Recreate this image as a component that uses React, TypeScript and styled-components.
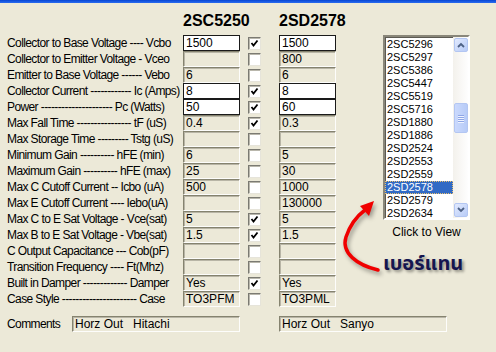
import { Fragment } from 'react'
import styled, { createGlobalStyle } from 'styled-components'

const GlobalStyle = createGlobalStyle`
  html, body {
    margin: 0;
    padding: 0;
    background: #ece9d8;
  }
  body {
    font-family: 'Liberation Sans', Arial, sans-serif;
    color: #000;
  }
`

type Row = {
  label: string
  a: string
  b: string
  checked?: boolean
  editable?: boolean
}

const rows: Row[] = [
  { label: 'Collector to Base Voltage ---- Vcbo', a: '1500', b: '1500', checked: true, editable: true },
  { label: 'Collector to Emitter Voltage - Vceo', a: '', b: '800' },
  { label: 'Emitter to Base Voltage ------ Vebo', a: '6', b: '6' },
  { label: 'Collector Current ------------ Ic (Amps)', a: '8', b: '8', checked: true, editable: true },
  { label: 'Power --------------------- Pc (Watts)', a: '50', b: '60', checked: true, editable: true },
  { label: 'Max Fall Time ---------------- tF (uS)', a: '0.4', b: '0.3', checked: true },
  { label: 'Max Storage Time --------- Tstg (uS)', a: '', b: '' },
  { label: 'Minimum Gain ---------- hFE (min)', a: '6', b: '5' },
  { label: 'Maximum Gain ---------- hFE (max)', a: '25', b: '30' },
  { label: 'Max C Cutoff Current -- Icbo (uA)', a: '500', b: '1000' },
  { label: 'Max E Cutoff Current ---- Iebo(uA)', a: '', b: '130000' },
  { label: 'Max C to E Sat Voltage - Vce(sat)', a: '5', b: '5', checked: true },
  { label: 'Max B to E Sat Voltage - Vbe(sat)', a: '1.5', b: '1.5', checked: true },
  { label: 'C Output Capacitance --- Cob(pF)', a: '', b: '' },
  { label: 'Transition Frequency ---- Ft(Mhz)', a: '', b: '' },
  { label: 'Built in Damper ------------- Damper', a: 'Yes', b: 'Yes', checked: true },
  { label: 'Case Style ---------------------- Case', a: 'TO3PFM', b: 'TO3PML' },
]

const parts = [
  '2SC5296', '2SC5297', '2SC5386', '2SC5447', '2SC5519', '2SC5716', '2SD1880',
  '2SD1886', '2SD2524', '2SD2553', '2SD2559', '2SD2578', '2SD2579', '2SD2634',
]

const Page = styled.div`
  width: 496px;
  height: 352px;
  overflow: hidden;
  background: #ece9d8;
`

const TitleStrip = styled.div`
  height: 3px;
  background: linear-gradient(#0846d4, #2a6cf0);
`

const Body = styled.div`
  display: flex;
  flex-direction: column;
  padding: 7px 0 0 7px;
`

const Main = styled.div`
  display: flex;
  align-items: flex-start;
`

const Table = styled.div`
  display: grid;
  grid-template-columns: 176px 57px 39px 57px;
  grid-template-rows: 25px repeat(17, 16px);
`

const Heading = styled.div`
  margin-top: 2px;
  font-size: 16px;
  font-weight: bold;
  line-height: 18px;
  white-space: nowrap;
  align-self: start;
`

const Label = styled.div`
  font-size: 12px;
  letter-spacing: -0.6px;
  line-height: 16px;
  white-space: nowrap;
`

const Field = styled.div<{ $editable?: boolean }>`
  box-sizing: border-box;
  height: 16px;
  padding: 0 2px;
  font-size: 12px;
  line-height: 14px;
  white-space: pre;
  overflow: hidden;
  border: 1px solid;
  background: ${({ $editable }) => ($editable ? '#fff' : '#ece9d8')};
  border-color: ${({ $editable }) =>
    $editable ? '#1a1a1a' : '#85836f #fdfdfb #fdfdfb #85836f'};
  box-shadow: ${({ $editable }) => ($editable ? 'none' : 'inset 1px 1px 0 #b8b5a6')};
`

const CheckBox = styled.div`
  box-sizing: border-box;
  width: 13px;
  height: 13px;
  margin-left: 8px;
  align-self: center;
  background: #fff;
  border: 1px solid;
  border-color: #7b7a72 #e6e4da #e6e4da #7b7a72;
  box-shadow: inset 1px 1px 0 #b9b7ac;
  display: flex;
  align-items: center;
  justify-content: center;
`

const RightPanel = styled.div`
  position: relative;
  display: flex;
  flex-direction: column;
  width: 87px;
  margin-left: 47px;
  padding-top: 25px;
`

const ListBox = styled.div`
  box-sizing: border-box;
  width: 87px;
  height: 185px;
  display: flex;
  background: #fff;
  border: 2px solid;
  border-color: #8a877a #fff #fff #8a877a;
  box-shadow: inset 1px 1px 0 #5c5a52;
`

const Items = styled.div`
  flex: 1;
  padding-top: 1px;
  min-width: 0;
`

const Item = styled.div<{ $selected?: boolean }>`
  box-sizing: border-box;
  height: 13px;
  padding-left: 2px;
  font-size: 11px;
  line-height: 13px;
  white-space: nowrap;
  color: ${({ $selected }) => ($selected ? '#fff' : '#000')};
  background: ${({ $selected }) => ($selected ? '#316ac5' : 'transparent')};
  outline: ${({ $selected }) => ($selected ? '1px dotted #e8c070' : 'none')};
  outline-offset: -1px;
`

const ScrollBar = styled.div`
  width: 15px;
  display: flex;
  flex-direction: column;
  align-items: center;
  padding: 1px 0;
  background: linear-gradient(90deg, #f3f1ec, #fefefe);
`

const ScrollButton = styled.div`
  box-sizing: border-box;
  width: 14px;
  height: 14px;
  border-radius: 2px;
  border: 1px solid #b3c6f2;
  background: linear-gradient(135deg, #e2eafe, #b7cbf7);
  display: flex;
  align-items: center;
  justify-content: center;
`

const Track = styled.div`
  flex: 1;
  width: 100%;
  display: flex;
  flex-direction: column;
  align-items: center;
`

const Thumb = styled.div`
  box-sizing: border-box;
  width: 14px;
  height: 30px;
  border-radius: 2px;
  border: 1px solid #b3c6f2;
  background: linear-gradient(90deg, #cad9fd, #b7cbf7);
  display: flex;
  flex-direction: column;
  align-items: center;
  justify-content: center;
  gap: 1px;
`

const Grip = styled.span`
  width: 6px;
  height: 1px;
  background: #8ea6e6;
  box-shadow: 0 1px 0 #eef3ff;
`

const Caption = styled.div`
  margin-top: 5px;
  font-size: 12px;
  line-height: 15px;
  text-align: center;
  white-space: nowrap;
`

const ThaiLabel = styled.div`
  margin-top: 10px;
  font-family: 'Noto Sans Thai', Tahoma, 'Noto Sans', sans-serif;
  font-size: 20px;
  font-weight: bold;
  line-height: 28px;
  color: #15154f;
  text-shadow: 2px 2px 3px rgba(0, 0, 0, 0.4);
  white-space: nowrap;
`

const ArrowMark = styled.svg`
  position: absolute;
  left: -48px;
  top: 185px;
  filter: drop-shadow(2px 3px 2px rgba(0, 0, 0, 0.35));
`

const CommentsRow = styled.div`
  display: grid;
  grid-template-columns: 65px 168px 39px 168px;
  margin-top: 9px;
`

const Chevron = ({ up }: { up?: boolean }) => (
  <svg width='8' height='6' viewBox='0 0 8 6'>
    <polyline
      points={up ? '1,5 4,2 7,5' : '1,1 4,4 7,1'}
      fill='none'
      stroke='#4d6185'
      strokeWidth='1.8'
    />
  </svg>
)

const Tick = () => (
  <svg width='9' height='9' viewBox='0 0 9 9'>
    <polyline points='1.5,4 3.5,6.5 7.5,1.5' fill='none' stroke='#000' strokeWidth='1.8' />
  </svg>
)

const App = () => {
  const selected = '2SD2578'

  return (
    <Page>
      <GlobalStyle />
      <TitleStrip />
      <Body>
        <Main>
          <Table>
            <div />
            <Heading>2SC5250</Heading>
            <div />
            <Heading>2SD2578</Heading>
            {rows.map((r) => (
              <Fragment key={r.label}>
                <Label>{r.label}</Label>
                <Field $editable={r.editable}>{r.a}</Field>
                <CheckBox>{r.checked && <Tick />}</CheckBox>
                <Field $editable={r.editable}>{r.b}</Field>
              </Fragment>
            ))}
          </Table>
          <RightPanel>
            <ListBox>
              <Items>
                {parts.map((p) => (
                  <Item key={p} $selected={p === selected}>{p}</Item>
                ))}
              </Items>
              <ScrollBar>
                <ScrollButton><Chevron up /></ScrollButton>
                <Track>
                  <Thumb style={{ marginTop: 51 }}>
                    <Grip />
                    <Grip />
                    <Grip />
                    <Grip />
                  </Thumb>
                </Track>
                <ScrollButton><Chevron /></ScrollButton>
              </ScrollBar>
            </ListBox>
            <Caption>Click to View</Caption>
            <ThaiLabel>เบอร์แทน</ThaiLabel>
            <ArrowMark width='50' height='80' viewBox='0 0 50 80'>
              <path
                d='M43 75 C 22 70, 6 58, 11 42 C 15 30, 22 21, 30 15'
                fill='none'
                stroke='#f00000'
                strokeWidth='3.5'
                strokeLinecap='round'
              />
              <polygon points='39,6 25,11 34,21' fill='#f00000' />
            </ArrowMark>
          </RightPanel>
        </Main>
        <CommentsRow>
          <Label>Comments</Label>
          <Field>{'Horz Out   Hitachi'}</Field>
          <div />
          <Field>{'Horz Out   Sanyo'}</Field>
        </CommentsRow>
      </Body>
    </Page>
  )
}

export default App
